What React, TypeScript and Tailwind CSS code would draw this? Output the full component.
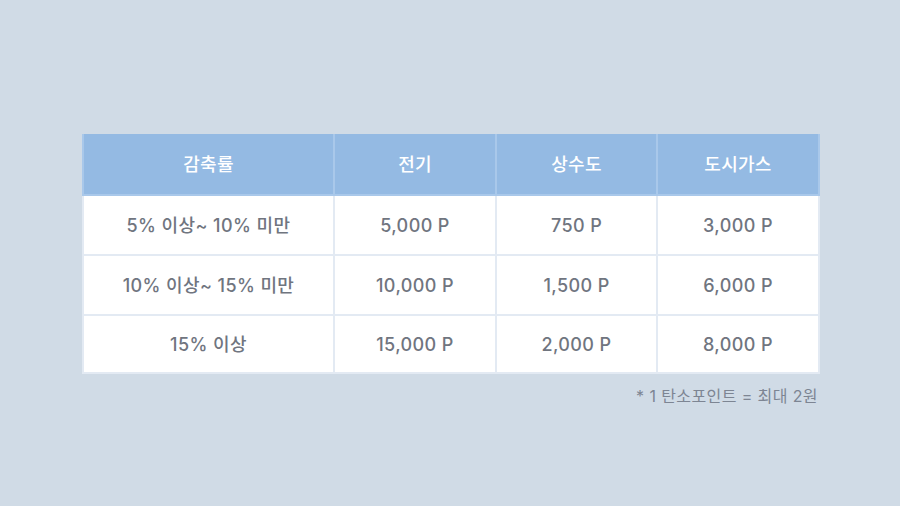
import React from 'react';

const rows = [
  ['5% 이상~ 10% 미만', '5,000 P', '750 P', '3,000 P'],
  ['10% 이상~ 15% 미만', '10,000 P', '1,500 P', '6,000 P'],
  ['15% 이상', '15,000 P', '2,000 P', '8,000 P'],
];

const heads = ['감축률', '전기', '상수도', '도시가스'];

export default function App() {
  return (
    <div
      className="w-[900px] h-[506px] bg-[#d0dbe6] flex flex-col items-center pt-[134px]"
      style={{ fontFamily: 'Inter, "Noto Sans CJK KR", "Noto Sans", sans-serif' }}
    >
      <div className="w-[736px]">
        <table className="w-full border-collapse table-fixed">
          <colgroup>
            <col className="w-[251px]" />
            <col className="w-[162px]" />
            <col className="w-[161px]" />
            <col className="w-[162px]" />
          </colgroup>
          <thead>
            <tr className="bg-[#94bae3] h-[61px]">
              {heads.map((h) => (
                <th
                  key={h}
                  className="border-2 border-[#a9c8ea] border-t-0 text-white text-[18px] font-medium tracking-[0.3px]"
                >
                  {h}
                </th>
              ))}
            </tr>
          </thead>
          <tbody>
            {rows.map((r, i) => (
              <tr key={i} className={`bg-white ${i === 2 ? 'h-[58px]' : 'h-[60px]'}`}>
                {r.map((c, j) => (
                  <td
                    key={j}
                    className="border-2 border-[#e3eaf3] text-center text-[18px] font-medium text-[#70757f] tracking-[0.4px]"
                  >
                    {c}
                  </td>
                ))}
              </tr>
            ))}
          </tbody>
        </table>
        <p className="text-right text-[16px] text-[#7d8593] mt-[10px] tracking-[0.4px]">
          * 1 탄소포인트 = 최대 2원
        </p>
      </div>
    </div>
  );
}
